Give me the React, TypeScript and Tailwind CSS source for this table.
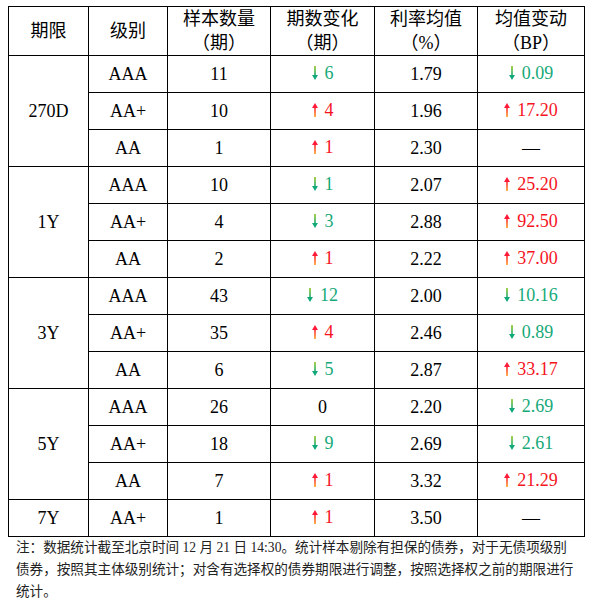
const font = { fontFamily: '"Liberation Serif", "Noto Sans CJK SC", serif' };

type Row = { grade: string; count: string; change: [("up" | "down" | null), string]; rate: string; bp: [("up" | "down" | null), string] };
type Group = { term: string; rows: Row[] };

const groups: Group[] = [
  {
    term: "270D",
    rows: [
      { grade: "AAA", count: "11", change: ["down", "6"], rate: "1.79", bp: ["down", "0.09"] },
      { grade: "AA+", count: "10", change: ["up", "4"], rate: "1.96", bp: ["up", "17.20"] },
      { grade: "AA", count: "1", change: ["up", "1"], rate: "2.30", bp: [null, "—"] },
    ],
  },
  {
    term: "1Y",
    rows: [
      { grade: "AAA", count: "10", change: ["down", "1"], rate: "2.07", bp: ["up", "25.20"] },
      { grade: "AA+", count: "4", change: ["down", "3"], rate: "2.88", bp: ["up", "92.50"] },
      { grade: "AA", count: "2", change: ["up", "1"], rate: "2.22", bp: ["up", "37.00"] },
    ],
  },
  {
    term: "3Y",
    rows: [
      { grade: "AAA", count: "43", change: ["down", "12"], rate: "2.00", bp: ["down", "10.16"] },
      { grade: "AA+", count: "35", change: ["up", "4"], rate: "2.46", bp: ["down", "0.89"] },
      { grade: "AA", count: "6", change: ["down", "5"], rate: "2.87", bp: ["up", "33.17"] },
    ],
  },
  {
    term: "5Y",
    rows: [
      { grade: "AAA", count: "26", change: [null, "0"], rate: "2.20", bp: ["down", "2.69"] },
      { grade: "AA+", count: "18", change: ["down", "9"], rate: "2.69", bp: ["down", "2.61"] },
      { grade: "AA", count: "7", change: ["up", "1"], rate: "3.32", bp: ["up", "21.29"] },
    ],
  },
  {
    term: "7Y",
    rows: [{ grade: "AA+", count: "1", change: ["up", "1"], rate: "3.50", bp: [null, "—"] }],
  },
];

function Arrow({ dir }: { dir: "up" | "down" }) {
  if (dir === "up") {
    return (
      <svg width="6" height="14" viewBox="0 0 6 14" className="mr-[7px] inline-block">
        <defs>
          <linearGradient id="gu" x1="0" y1="1" x2="0" y2="0">
            <stop offset="0" stopColor="#ff9a1a" />
            <stop offset="1" stopColor="#ff1a3a" />
          </linearGradient>
        </defs>
        <rect x="2.2" y="4" width="1.6" height="10" fill="url(#gu)" />
        <polygon points="3,0 6,5 0,5" fill="#ff1a3a" />
      </svg>
    );
  }
  return (
    <svg width="6" height="14" viewBox="0 0 6 14" className="mr-[7px] inline-block">
      <defs>
        <linearGradient id="gd" x1="0" y1="0" x2="0" y2="1">
          <stop offset="0" stopColor="#8cc21a" />
          <stop offset="1" stopColor="#12a97a" />
        </linearGradient>
      </defs>
      <rect x="2.2" y="0" width="1.6" height="10" fill="url(#gd)" />
      <polygon points="3,14 6,9 0,9" fill="#12a97a" />
    </svg>
  );
}

function Delta({ v }: { v: [("up" | "down" | null), string] }) {
  const [dir, text] = v;
  const color = dir === "up" ? "text-[#f5141e]" : dir === "down" ? "text-[#16a978]" : "text-black";
  return (
    <span className={`inline-flex items-center ${color}`}>
      {dir && <Arrow dir={dir} />}
      {text}
    </span>
  );
}

const cell = "border border-black text-center align-middle p-0";

export default function App() {
  return (
    <div className="bg-white w-[592px] h-[605px] pt-[6px] pl-2 text-black" style={font}>
      <table className="border-collapse table-fixed w-[576px] text-[18px]">
        <colgroup>
          <col className="w-[80px]" />
          <col className="w-[79px]" />
          <col className="w-[103px]" />
          <col className="w-[104px]" />
          <col className="w-[103px]" />
          <col className="w-[107px]" />
        </colgroup>
        <thead>
          <tr className="h-[49px] leading-[24px]">
            <th className={`${cell} font-normal`}>期限</th>
            <th className={`${cell} font-normal`}>级别</th>
            <th className={`${cell} font-normal`}>
              样本数量
              <br />
              （期）
            </th>
            <th className={`${cell} font-normal`}>
              期数变化
              <br />
              （期）
            </th>
            <th className={`${cell} font-normal`}>
              利率均值
              <br />
              （%）
            </th>
            <th className={`${cell} font-normal`}>
              均值变动
              <br />
              （BP）
            </th>
          </tr>
        </thead>
        <tbody>
          {groups.map((g) =>
            g.rows.map((r, i) => (
              <tr key={g.term + r.grade} className="h-[37px]">
                {i === 0 && (
                  <td className={cell} rowSpan={g.rows.length}>
                    {g.term}
                  </td>
                )}
                <td className={cell}>{r.grade}</td>
                <td className={cell}>{r.count}</td>
                <td className={cell}>
                  <Delta v={r.change} />
                </td>
                <td className={cell}>{r.rate}</td>
                <td className={cell}>
                  <Delta v={r.bp} />
                </td>
              </tr>
            ))
          )}
        </tbody>
      </table>
      <p className="pl-2 text-[13.6px] leading-[22px] text-[#222] whitespace-nowrap">
        注：数据统计截至北京时间 12 月 21 日 14:30。统计样本剔除有担保的债券，对于无债项级别
        <br />
        债券，按照其主体级别统计；对含有选择权的债券期限进行调整，按照选择权之前的期限进行
        <br />
        统计。
      </p>
    </div>
  );
}
